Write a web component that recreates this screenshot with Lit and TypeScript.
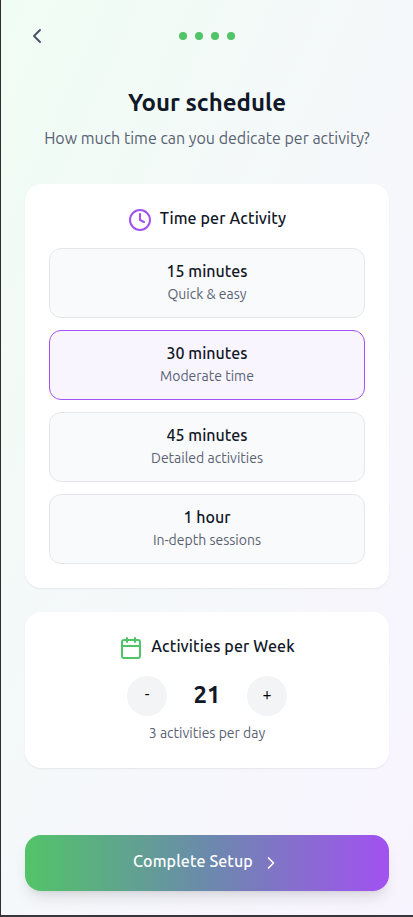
import { LitElement, html, css, svg } from "lit";
import { customElement, state } from "lit/decorators.js";
import { classMap } from "lit/directives/class-map.js";

interface Duration {
  label: string;
  note: string;
}

const DURATIONS: Duration[] = [
  { label: "15 minutes", note: "Quick & easy" },
  { label: "30 minutes", note: "Moderate time" },
  { label: "45 minutes", note: "Detailed activities" },
  { label: "1 hour", note: "In-depth sessions" },
];

const clock = svg`<circle cx="12" cy="12" r="10"></circle><polyline points="12 6 12 12 16 14"></polyline>`;
const calendar = svg`<path d="M8 2v4M16 2v4M3 10h18"></path><rect x="3" y="4" width="18" height="18" rx="2"></rect>`;

@customElement("app-root")
export class AppRoot extends LitElement {
  @state() private selected = 1;
  @state() private perWeek = 21;

  static styles = css`
    :host {
      display: block;
      font-family: Ubuntu, "Noto Sans", "Open Sans", sans-serif;
      color: #111827;
    }
    * { box-sizing: border-box; }
    button { font: inherit; color: inherit; border: 0; margin: 0; padding: 0; cursor: pointer; }
    svg { display: block; fill: none; stroke: currentColor; stroke-width: 2; stroke-linecap: round; stroke-linejoin: round; }
    .screen {
      height: 917px;
      display: flex;
      flex-direction: column;
      padding: 24px;
      border-left: 1px solid #2f2d30;
      border-bottom: 2px solid #38363b;
      background: linear-gradient(to bottom right, #f0fdf4, #f5f8fa 50%, #f8f4ff);
    }
    .top { display: flex; align-items: center; justify-content: space-between; height: 24px; }
    .back { background: none; color: #4b5563; width: 24px; height: 24px; }
    .dots { display: flex; gap: 8px; }
    .dot { width: 8px; height: 8px; border-radius: 50%; background: #52c468; }
    .spacer { width: 24px; }
    .intro { margin-top: 39px; text-align: center; }
    h1 { margin: 0; font-size: 24px; line-height: 32px; font-weight: 600; white-space: nowrap; }
    .lead { margin: 7px 0 0; font-size: 16px; line-height: 24px; font-weight: 400; color: #596273; white-space: nowrap; }
    .card {
      background: #fff;
      border-radius: 16px;
      padding: 24px;
      box-shadow: 0 1px 2px rgba(0, 0, 0, 0.07);
      text-align: center;
    }
    .time { margin-top: 34px; }
    .week { margin-top: 24px; height: 156px; }
    .head { display: flex; justify-content: center; height: 24px; }
    .head svg { width: 24px; height: 24px; }
    .time .head svg { color: #a053ef; margin-right: 8px; }
    .week .head svg { color: #52c468; margin-right: 8px; }
    h2 { margin: 0; font-size: 16px; line-height: 20px; font-weight: 500; letter-spacing: 0.12px; white-space: nowrap; }
    .options { display: flex; flex-direction: column; gap: 12px; margin-top: 16px; }
    .option {
      height: 70px;
      border: 1px solid #e5e7eb;
      border-radius: 12px;
      background: #f9fafb;
      display: flex;
      flex-direction: column;
      align-items: center;
      padding-top: 10px;
    }
    .option.on { border-color: #a053ef; background: #f8f5ff; }
    .label { font-size: 16px; line-height: 24px; font-weight: 500; }
    .note { font-size: 14px; line-height: 22px; font-weight: 400; color: #596273; }
    .stepper { display: flex; justify-content: center; align-items: center; margin-top: 16px; }
    .step { width: 40px; height: 40px; border-radius: 50%; background: #f3f4f6; font-size: 16px; line-height: 36px; padding-bottom: 4px; color: #000; }
    .count { width: 80px; font-size: 24px; line-height: 32px; font-weight: 600; padding-bottom: 2px; }
    .daily { margin-top: 6px; }
    .finish {
      margin-top: auto;
      height: 56px;
      border-radius: 16px;
      background: linear-gradient(90deg, #52c468, #6b8aac 50%, #a053ef 98%);
      color: #fff;
      display: flex;
      align-items: center;
      justify-content: center;
      gap: 8px;
      font-weight: 500;
      letter-spacing: 0.12px;
      box-shadow: 0 10px 15px -3px rgba(0, 0, 0, 0.1), 0 4px 6px -4px rgba(0, 0, 0, 0.1);
    }
    .finish span { line-height: 24px; padding-bottom: 4px; }
    .finish svg { width: 20px; height: 20px; }
  `;

  private change(by: number) {
    this.perWeek = Math.max(7, this.perWeek + by);
  }

  render() {
    return html`
      <main class="screen">
        <header class="top">
          <button class="back" aria-label="Back">
            <svg viewBox="0 0 24 24"><path d="m15 18-6-6 6-6"></path></svg>
          </button>
          <div class="dots">${[1, 2, 3, 4].map(() => html`<i class="dot"></i>`)}</div>
          <div class="spacer"></div>
        </header>
        <div class="intro">
          <h1>Your schedule</h1>
          <p class="lead">How much time can you dedicate per activity?</p>
        </div>
        <section class="card time">
          <div class="head"><svg viewBox="0 0 24 24">${clock}</svg><h2>Time per Activity</h2></div>
          <div class="options">
            ${DURATIONS.map(
              (d, i) => html`
                <button class=${classMap({ option: true, on: i === this.selected })} @click=${() => (this.selected = i)}>
                  <span class="label">${d.label}</span>
                  <span class="note">${d.note}</span>
                </button>
              `
            )}
          </div>
        </section>
        <section class="card week">
          <div class="head"><svg viewBox="0 0 24 24">${calendar}</svg><h2>Activities per Week</h2></div>
          <div class="stepper">
            <button class="step" @click=${() => this.change(-7)}>-</button>
            <span class="count">${this.perWeek}</span>
            <button class="step" @click=${() => this.change(7)}>+</button>
          </div>
          <div class="note daily">${Math.round(this.perWeek / 7)} activities per day</div>
        </section>
        <button class="finish">
          <span>Complete Setup</span>
          <svg viewBox="0 0 24 24"><path d="m9 18 6-6-6-6"></path></svg>
        </button>
      </main>
    `;
  }
}
